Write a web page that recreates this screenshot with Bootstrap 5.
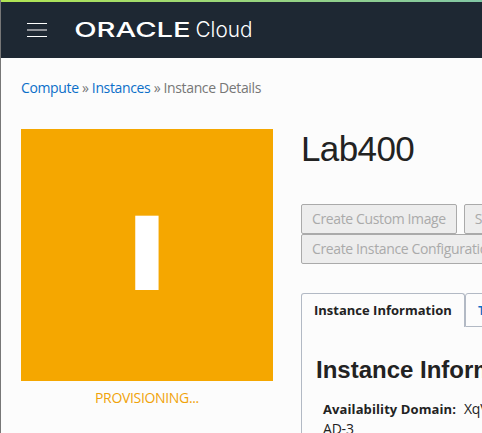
<!DOCTYPE html>
<html lang="en">
<head>
<meta charset="utf-8">
<meta name="viewport" content="width=device-width, initial-scale=1">
<title>Instance Details</title>
<link href="https://cdn.jsdelivr.net/npm/bootstrap@5.3.0/dist/css/bootstrap.min.css" rel="stylesheet">
<style>
html,body{height:100%}
body{background:#fcfcfc;color:#222;font:14px/20px "Open Sans","Noto Sans",sans-serif;overflow:hidden}
.shell{width:482px;height:433px;border-left:1px solid #777;overflow:hidden}
.accent-line{height:2px;background:linear-gradient(90deg,#b1e553,#82c7a5)}
.topbar{height:56px;background:#1e2833;padding:0 0 0 26px}
.topbar svg{display:block}
.crumbs{padding:20px 0 0 20px;color:#777;height:71px;white-space:nowrap;letter-spacing:-.36px}
.crumbs a{color:#0b6fc9}
.content-row{padding-left:20px;gap:28px}
.side{width:252px;flex:none}
.tile{height:252px;background:#f5a700}
.state{color:#f0a30a;padding-top:7px;letter-spacing:-.33px}
.main{width:320px;flex:none}
h1{font:35px/40px "Liberation Sans",Arial,sans-serif;letter-spacing:-.6px;margin:0;color:#222}
.actions{margin-top:35px;height:60px;row-gap:0;column-gap:7px}
.act{height:30px;padding:0 10px;border:1px solid #b2b9c4;border-radius:2px;background:#ededed!important;color:#aaa!important;font-size:14px;line-height:28px;letter-spacing:-.37px;opacity:1!important;white-space:nowrap}
.tab-item{height:34px;border:1px solid #b2b9c4;font-weight:700;font-size:13px;line-height:33px;padding:0 12px;white-space:nowrap;text-decoration:none;color:#222}
.tabs{margin-top:29px}
.tab-on{width:164px;border-bottom:0;border-radius:3px 3px 0 0}
.tab-off{width:120px;color:#0b6fc9;border-radius:3px 3px 0 0}
.panel{border-left:1px solid #b2b9c4;height:120px;padding:26px 0 0 14px}
h2{font:bold 24px/34px "Liberation Sans",Arial,sans-serif;margin:0;white-space:nowrap}
.facts{padding:12px 0 0 7px;font-size:14px;line-height:20px;white-space:nowrap;letter-spacing:-.2px}
.facts b{font-size:13px;letter-spacing:.1px;margin-right:1px}
</style>
</head>
<body>
<div class="shell">
  <div class="accent-line"></div>
  <header class="topbar d-flex align-items-center">
    <svg width="240" height="56" viewBox="27 2 240 56" role="img" aria-label="Oracle Cloud">
      <path d="M27 23.5H47M27 36.5H47" stroke="#fff"/>
      <path d="M27 30H47" stroke="#8f9298" stroke-width="2"/>
      <text x="74.2" y="37" fill="#fff" font-family="Inter" font-weight="500" font-size="20.5" textLength="116.5" lengthAdjust="spacingAndGlyphs">ORACLE</text>
      <text x="195.5" y="37" fill="#fff" font-family="Inter" font-weight="300" font-size="21.5" textLength="57" lengthAdjust="spacingAndGlyphs">Cloud</text>
    </svg>
  </header>
  <nav class="crumbs" aria-label="breadcrumb"><a class="text-decoration-none" href="#">Compute</a> » <a class="text-decoration-none" href="#">Instances</a> » <span>Instance Details</span></nav>
  <div class="content-row d-flex">
    <aside class="side">
      <div class="tile">
        <svg class="d-block" width="252" height="252"><text transform="translate(126 161) scale(1.5 1)" text-anchor="middle" fill="#fff" font-family="Liberation Sans" font-weight="700" font-size="107.5">I</text></svg>
      </div>
      <div class="state text-center">PROVISIONING...</div>
    </aside>
    <main class="main">
      <h1>Lab400</h1>
      <div class="actions d-flex flex-wrap align-content-start">
        <button class="btn act" disabled>Create Custom Image</button>
        <button class="btn act" disabled>Stop</button>
        <button class="btn act" disabled>Create Instance Configuration</button>
      </div>
      <div class="tabs d-flex">
        <a class="tab-item tab-on" href="#">Instance Information</a>
        <a class="tab-item tab-off" href="#">Tags</a>
      </div>
      <section class="panel">
        <h2>Instance Information</h2>
        <div class="facts"><b>Availability Domain:</b>&nbsp; XqVN:PHX-<br>AD-3</div>
      </section>
    </main>
  </div>
</div>
<script src="https://cdn.jsdelivr.net/npm/bootstrap@5.3.0/dist/js/bootstrap.bundle.min.js"></script>
</body>
</html>
